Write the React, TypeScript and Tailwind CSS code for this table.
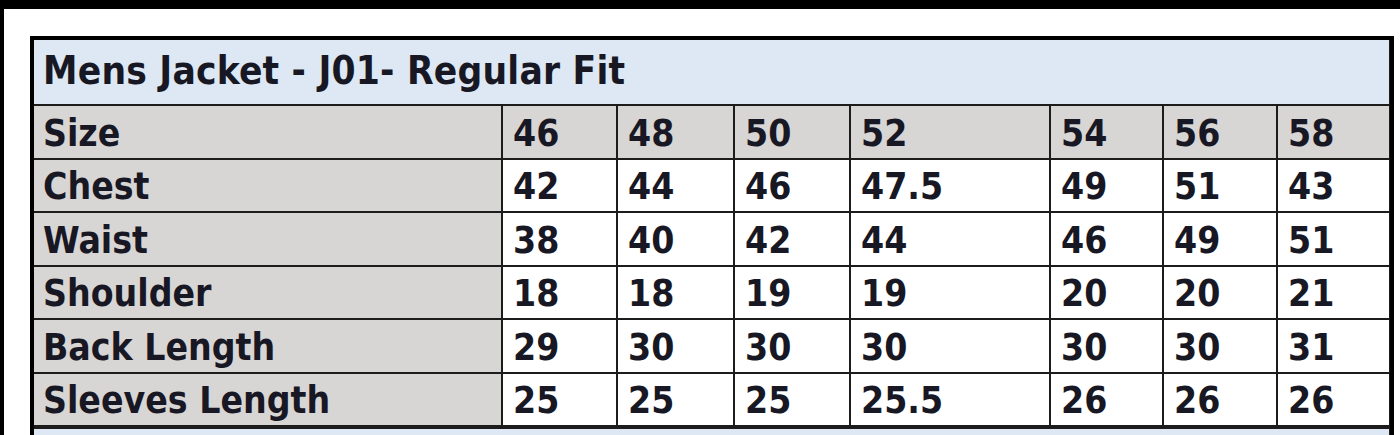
import React from "react";

const cols = ["46", "48", "50", "52", "54", "56", "58"];
const rows: [string, string[]][] = [
  ["Chest", ["42", "44", "46", "47.5", "49", "51", "43"]],
  ["Waist", ["38", "40", "42", "44", "46", "49", "51"]],
  ["Shoulder", ["18", "18", "19", "19", "20", "20", "21"]],
  ["Back Length", ["29", "30", "30", "30", "30", "30", "31"]],
  ["Sleeves Length", ["25", "25", "25", "25.5", "26", "26", "26"]],
];

export default function App() {
  return (
    <div
      className="w-[1400px] h-[435px] bg-black overflow-hidden pt-[9px] pl-[4px] flex"
      style={{ fontFamily: '"DejaVu Sans Condensed", "DejaVu Sans", sans-serif' }}
    >
      <div className="flex-1 bg-white pt-[27px] pl-[26px] pr-[6px]">
        <div className="border-4 border-black bg-[#1c1c1c] grid grid-cols-[467px_113px_115px_114px_198px_111px_112px_111px] grid-rows-[64px_repeat(5,51.5px)_51.5px_40px] gap-[2px] text-[37px] font-bold text-[#181824] leading-none">
          <div className="col-span-8 bg-[#dde8f4] flex items-center pl-[9px] pb-[2px] text-[38.5px] tracking-[0.2px]">
            Mens Jacket - J01- Regular Fit
          </div>
          <div className="bg-[#d8d5d5] flex items-end pl-[9px] pb-[6px]">Size</div>
          {cols.map((c) => (
            <div key={c} className="bg-[#d8d5d5] flex items-end pl-[10px] pb-[6px]">
              {c}
            </div>
          ))}
          {rows.map(([label, vals]) => (
            <React.Fragment key={label}>
              <div className="bg-[#d8d5d5] flex items-end pl-[9px] pb-[6px]">{label}</div>
              {vals.map((v, i) => (
                <div key={i} className="bg-white flex items-end pl-[10px] pb-[6px]">
                  {v}
                </div>
              ))}
            </React.Fragment>
          ))}
          <div className="col-span-8 bg-[#dde8f4] mt-[2px]" />
        </div>
      </div>
    </div>
  );
}
